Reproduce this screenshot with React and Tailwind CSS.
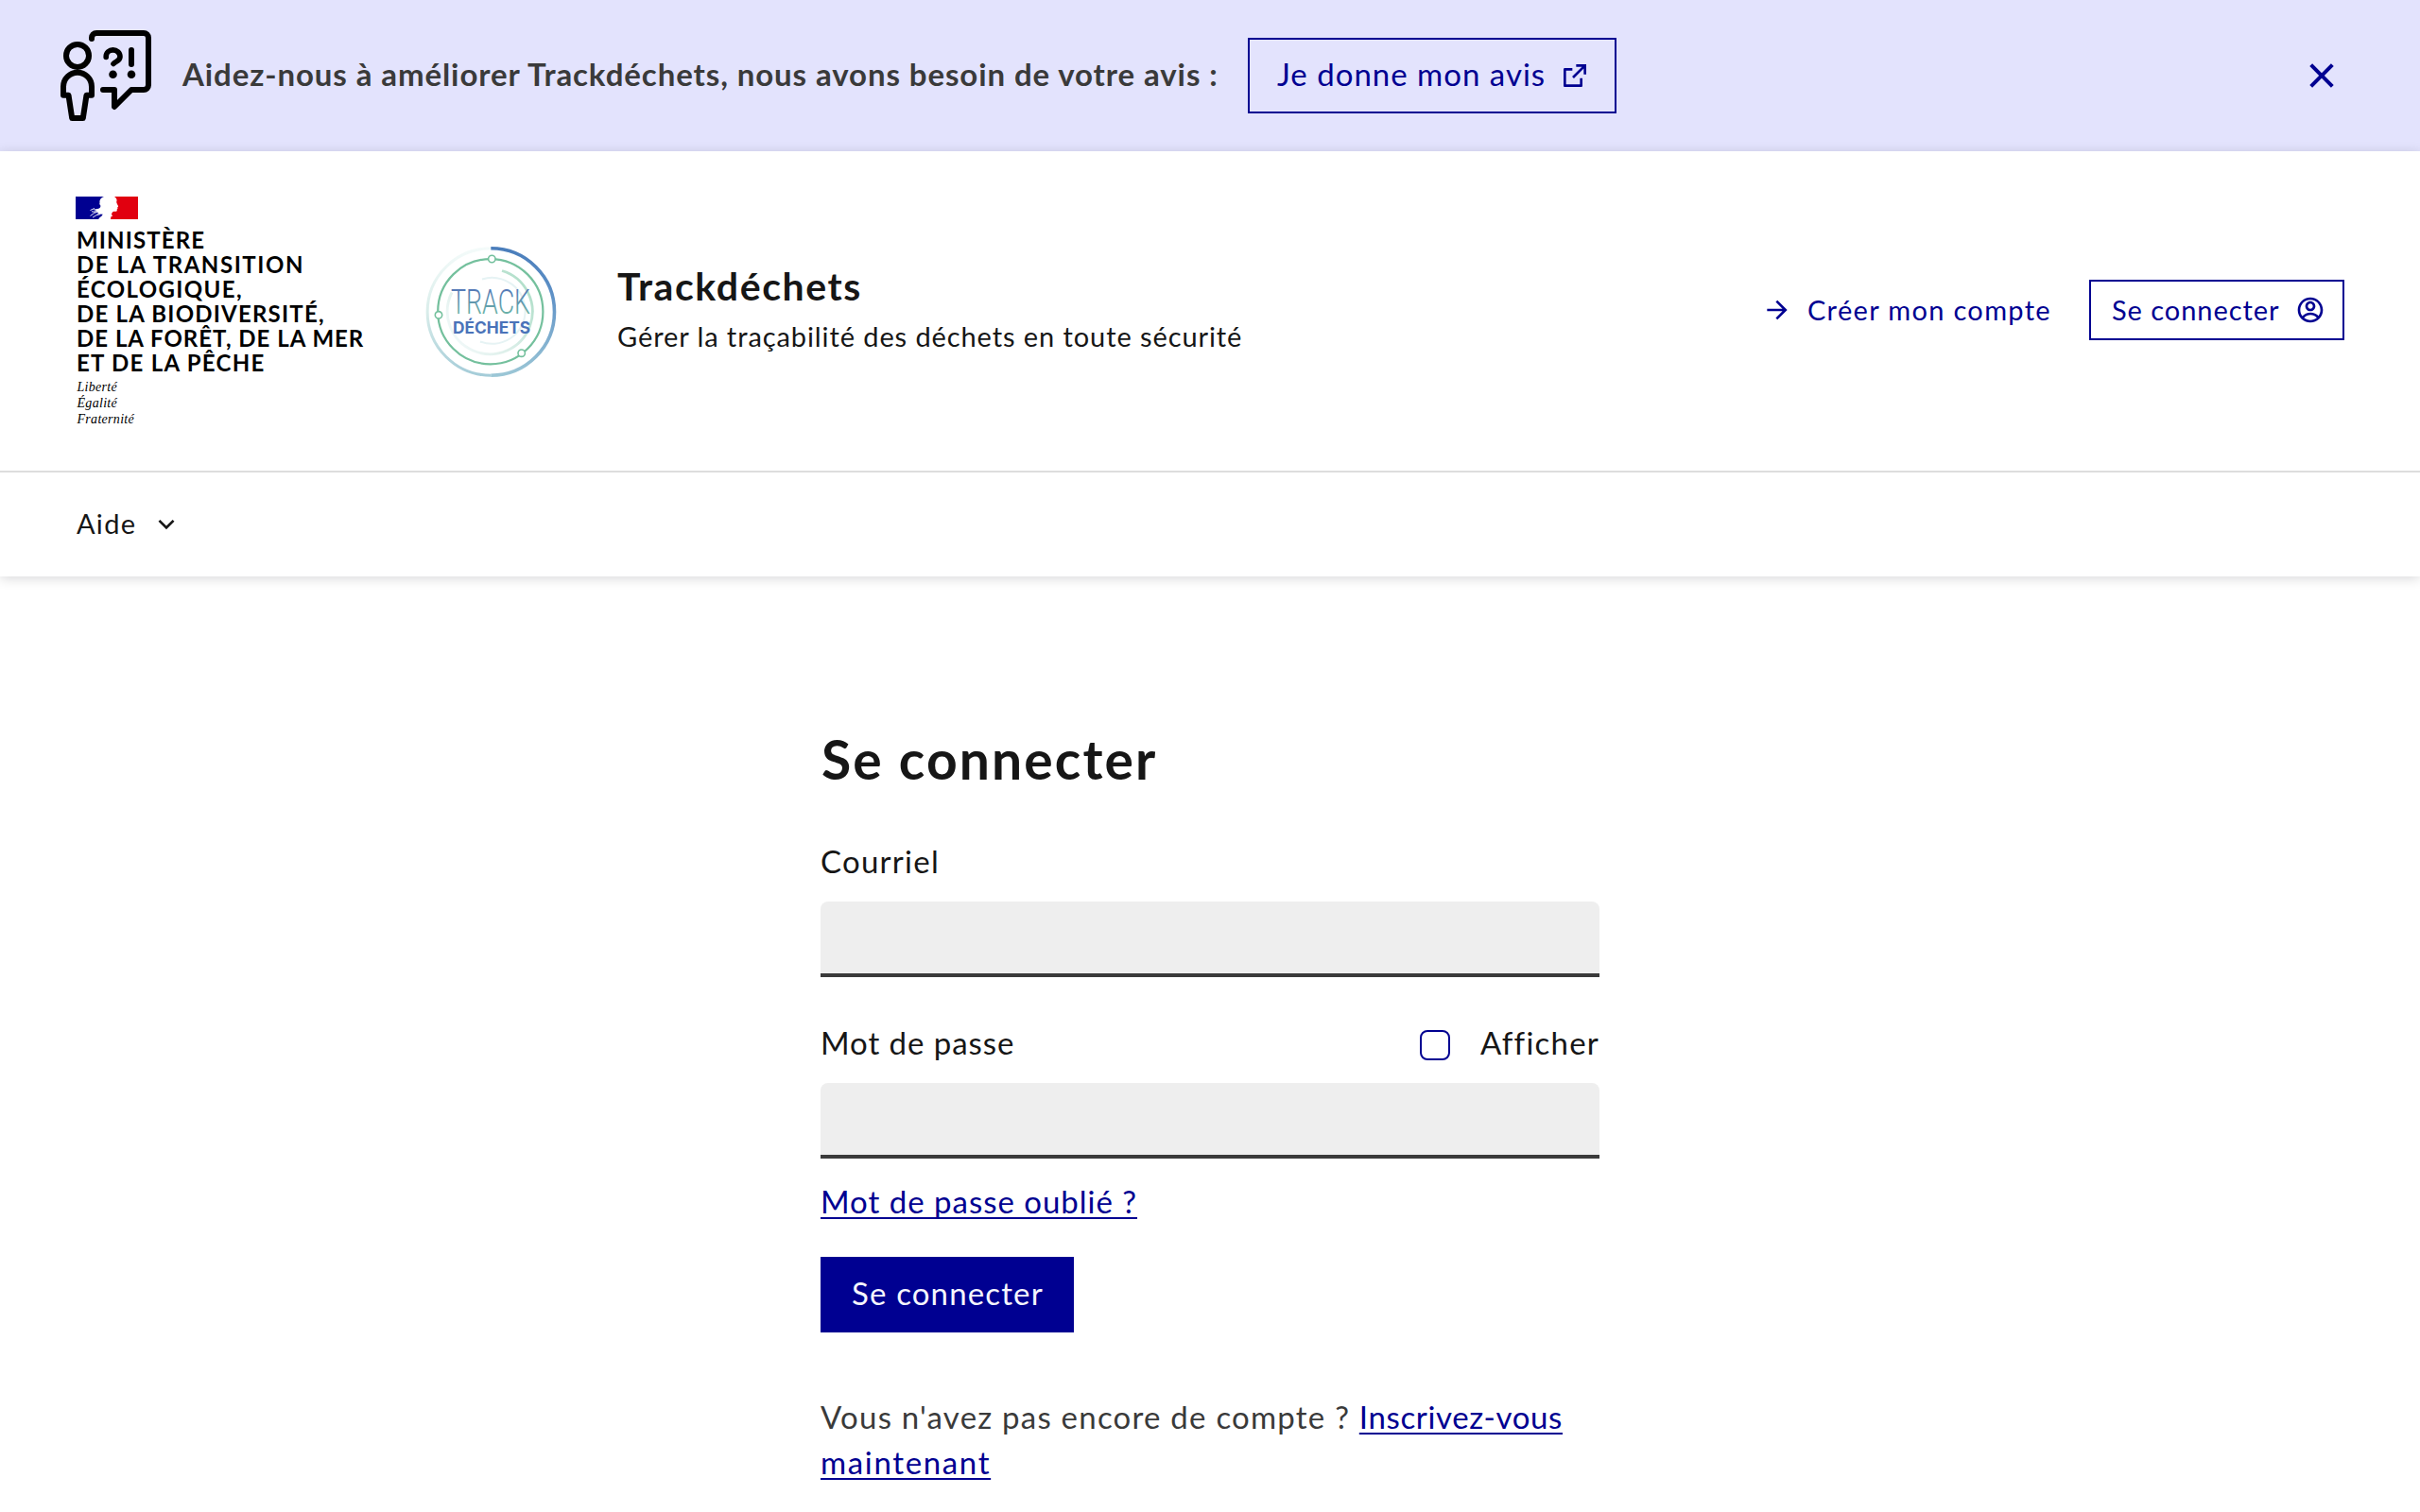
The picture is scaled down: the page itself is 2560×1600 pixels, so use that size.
import React from 'react';
import {
  RiExternalLinkLine,
  RiCloseLine,
  RiArrowRightLine,
  RiAccountCircleLine,
  RiArrowDownSLine,
} from 'react-icons/ri';

function FeedbackIcon() {
  return (
    <svg className="h-24 w-24 shrink-0 ml-[64px]" viewBox="64 32 96 96" fill="none" stroke="#000" strokeWidth="6" strokeLinecap="round" strokeLinejoin="round">
      <circle cx="82" cy="58.9" r="12" />
      <path d="M67 100.8V91.7a15 15 0 0 1 30 0v9.1h-5.5L87.8 125H76.2l-3.7-24.2z" />
      <path d="M97 41v-1a5 5 0 0 1 5-5h50a5 5 0 0 1 5 5v50a5 5 0 0 1-5 5h-13l-18 18V95h-12" />
      <path d="M112.200 60.500v-.8c0-4 3.300-6.800 7.300-6.800s7.500 3 7.500 7.200c0 4.600-4.500 4.500-7 7.400" strokeWidth="5.600" />
      <path d="M139 53v15" />
      <circle cx="119.500" cy="78.800" r="4.300" fill="#000" stroke="none" />
      <circle cx="139" cy="78.800" r="4.300" fill="#000" stroke="none" />
    </svg>
  );
}

function Flag() {
  return (
    <svg className="h-6 w-[66px]" viewBox="0 0 66 24">
      <path fill="#000091" d="M0 0h30c-2.400.8-4 2.300-4.500 4.400-.2 1.400.3 2.300-.2 3.200-.4.700.6 1.200 1 1.800.4 1.100-.4 2.300-1.500 3-2 .8-4.500.6-6.500 1.400l4.500 1.400-3.500.400 5 1.400-2 1.600 6.500.2-1.600 2.200c-1.200.8-2.400 1.600-3 3H0z" />
      <path fill="#e1000f" d="M66 0H41c1.300.9 2.200 2.200 2.600 3.700l-.4 2.300c.3 1.200 1.500 3.200 1.900 4.200.2.700-1 1-.9 1.600l.3 1-.8.800.1 1.400c-.3 1-2 .7-3.600.8-1.400.6-2 1.700-2.200 3.200l1.200 1.600-1.800.6-.4 2.800H66z" />
      <path fill="none" stroke="#fff" strokeWidth=".9" d="M15.500 14.500l4.500-2M15.500 20.500l4-3 4-1.500M18 22.200l4-2.500 4-1M17 15.800l4 .5" />
    </svg>
  );
}

function TrackLogo() {
  return (
    <svg className="mt-[100px] h-[140px] w-[140px] shrink-0 overflow-visible" viewBox="449 260 140 140" fill="none">
      <defs>
        <linearGradient id="outer" x1="0" y1="262" x2="0" y2="398" gradientUnits="userSpaceOnUse">
          <stop offset="0" stopColor="#4a7dbb" />
          <stop offset=".35" stopColor="#5d90c6" />
          <stop offset="1" stopColor="#9cc7d6" />
        </linearGradient>
        <linearGradient id="outerLeft" x1="0" y1="262" x2="0" y2="398" gradientUnits="userSpaceOnUse">
          <stop offset="0" stopColor="#f4fbfa" />
          <stop offset=".5" stopColor="#d9edea" />
          <stop offset="1" stopColor="#a4ccd8" />
        </linearGradient>
        <linearGradient id="mid" x1="560" y1="290" x2="475" y2="350" gradientUnits="userSpaceOnUse">
          <stop offset="0" stopColor="#a9dcc4" />
          <stop offset=".5" stopColor="#d5ece4" />
          <stop offset="1" stopColor="#f0f8f8" />
        </linearGradient>
        <linearGradient id="word" x1="0" y1="304" x2="0" y2="333" gradientUnits="userSpaceOnUse">
          <stop offset="0" stopColor="#5374b8" />
          <stop offset="1" stopColor="#6cb4a6" />
        </linearGradient>
      </defs>
      <path d="M519.300 397.200a67.200 67.200 0 0 1 0-134.400" stroke="url(#outerLeft)" strokeWidth="3" />
      <path d="M519.300 262.800a67.200 67.200 0 0 1 0 134.400" stroke="url(#outer)" strokeWidth="3.600" />
      <path d="M531 286.500a45 45 0 1 1-53 23" stroke="url(#mid)" strokeWidth="2.800" />
      <path d="M510 295.500a35 35 0 1 1-2 66" stroke="#e6f3f4" strokeWidth="2" />
      <circle cx="518.800" cy="329.700" r="55.600" stroke="#74c09d" strokeWidth="2.200" />
      <circle cx="520.300" cy="274" r="3.700" fill="#fff" stroke="#74c09d" strokeWidth="1.600" />
      <circle cx="464" cy="333.300" r="3.700" fill="#fff" stroke="#74c09d" strokeWidth="1.600" />
      <circle cx="551.700" cy="373.700" r="3.700" fill="#fff" stroke="#74c09d" strokeWidth="1.600" />
      <text x="477" y="332" textLength="84" lengthAdjust="spacingAndGlyphs" fill="url(#word)" className="font-['Roboto'] text-[37px] font-light">TRACK</text>
      <text x="479" y="352.500" textLength="82" lengthAdjust="spacingAndGlyphs" fill="#4a73b9" className="font-['Inter'] text-[17px] font-bold">DÉCHETS</text>
    </svg>
  );
}

const LINK = 'underline decoration-2 underline-offset-4 [text-decoration-skip-ink:none] text-[#000091]';

export default function App() {
  return (
    <div className="h-[1600px] w-[2560px] overflow-hidden bg-white font-['Lato',sans-serif] text-[33px] leading-[48px] text-[#161616]">
      <div className="flex h-40 items-center bg-[#e3e3fd]">
        <FeedbackIcon />
        <p className="ml-[33px] w-[1127px] whitespace-nowrap pb-1 font-bold tracking-[0.91px] text-[#3a3a3a]">
          Aidez-nous à améliorer Trackdéchets, nous avons besoin de votre avis :
        </p>
        <a className="flex h-20 w-[390px] items-center justify-between border-2 border-[#000091] pl-[29px] pr-[26px] text-[#000091]">
          <span className="whitespace-nowrap pb-1 tracking-[1px]">Je donne mon avis</span>
          <RiExternalLinkLine className="h-8 w-8" />
        </a>
        <button className="ml-auto mr-20 text-[#000091]">
          <RiCloseLine className="h-12 w-12" />
        </button>
      </div>

      <header className="relative bg-white shadow-[0_2px_12px_rgba(0,0,18,0.16)]">
        <div className="flex h-[340px] items-start border-b-2 border-[#dddddd] px-20">
          <div className="w-[369px] shrink-0 pt-12">
            <Flag />
            <div className="mt-[9px] whitespace-nowrap pl-px text-[24px] font-bold leading-[26px] text-black">
              <div className="tracking-[1.14px]">MINISTÈRE</div>
              <div className="tracking-[1.56px]">DE LA TRANSITION</div>
              <div className="tracking-[1.39px]">ÉCOLOGIQUE,</div>
              <div className="tracking-[1.21px]">DE LA BIODIVERSITÉ,</div>
              <div className="tracking-[1px]">DE LA FORÊT, DE LA MER</div>
              <div className="tracking-[1.26px]">ET DE LA PÊCHE</div>
            </div>
            <div className="mt-1 pl-[1.500px] font-['Liberation_Serif',serif] text-[14px] italic leading-[17px] tracking-[0.3px] text-black">
              <div>Liberté</div>
              <div>Égalité</div>
              <div>Fraternité</div>
            </div>
          </div>
          <TrackLogo />
          <div className="ml-[64px] pt-[115px]">
            <p className="text-[41px] font-bold leading-[56px] tracking-[1.56px]">Trackdéchets</p>
            <p className="text-[29px] leading-[50px] tracking-[0.91px]">Gérer la traçabilité des déchets en toute sécurité</p>
          </div>
          <div className="ml-auto mt-[136px] flex h-16 items-center text-[29px] text-[#000091]">
            <a className="flex w-[346px] items-center gap-4">
              <RiArrowRightLine className="h-8 w-8" />
              <span className="pb-px tracking-[1.33px]">Créer mon compte</span>
            </a>
            <a className="flex h-16 w-[270px] items-center justify-between border-2 border-[#000091] pl-[22px] pr-[18px]">
              <span className="pb-px tracking-[0.95px]">Se connecter</span>
              <RiAccountCircleLine className="h-8 w-8" />
            </a>
          </div>
        </div>
        <nav className="flex h-[110px] items-center px-20 text-[29px]">
          <span className="w-20 pb-[3px] pl-px tracking-[1.3px]">Aide</span>
          <RiArrowDownSLine className="mb-px h-8 w-8" />
        </nav>
      </header>

      <main className="mx-auto w-[824px] pt-[157px]">
        <h1 className="pl-px text-[57px] font-bold leading-[72px] tracking-[2.12px]">Se connecter</h1>
        <label className="mt-12 block tracking-[1.25px]">Courriel</label>
        <input className="mt-[19px] block h-20 w-full rounded-t-lg bg-[#eeeeee] px-8 shadow-[inset_0_-4px_0_0_#3a3a3a]" />
        <div className="mt-[45px] flex items-center">
          <span className="tracking-[0.94px]">Mot de passe</span>
          <label className="ml-auto flex w-[190px] items-center gap-8 whitespace-nowrap tracking-[1.22px]">
            <span className="mt-[6px] h-8 w-8 shrink-0 rounded-lg border-2 border-[#000091]" />
            Afficher
          </label>
        </div>
        <input className="mt-[19px] block h-20 w-full rounded-t-lg bg-[#eeeeee] px-8 shadow-[inset_0_-4px_0_0_#3a3a3a]" />
        <div className="mt-[21px]">
          <a className={`${LINK} tracking-[0.98px]`}>Mot de passe oublié ?</a>
        </div>
        <button className="mt-[35px] block h-20 w-[268px] bg-[#000091] pb-[5px] pl-[33px] text-left tracking-[1.15px] text-[#f5f5fe]">
          Se connecter
        </button>
        <p className="mt-[65px] tracking-[1.22px] text-[#3a3a3a]">
          Vous n'avez pas encore de compte ?{' '}
          <a className={LINK}>
            <span className="tracking-[0.64px]">Inscrivez-vous</span>{' '}
            <span className="tracking-[1.65px]">maintenant</span>
          </a>
        </p>
      </main>
    </div>
  );
}
